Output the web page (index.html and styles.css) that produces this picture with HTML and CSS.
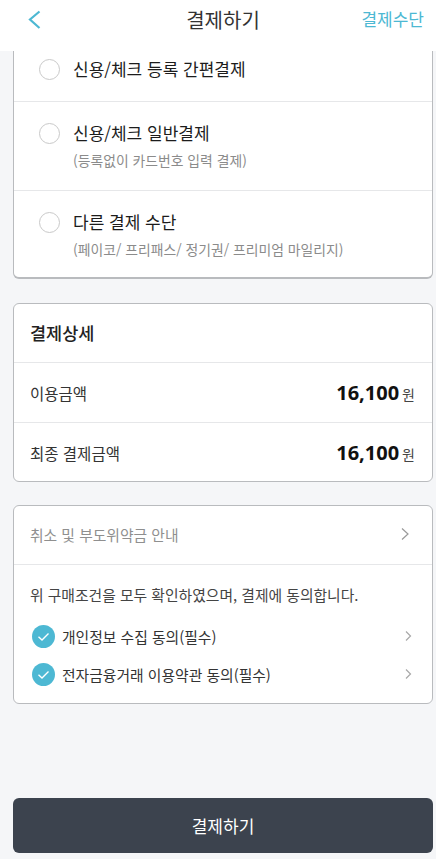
FILE: index.html
```html
<!DOCTYPE html>
<html lang="ko">
<head>
<meta charset="UTF-8">
<meta name="viewport" content="width=device-width, initial-scale=1.0">
<title>결제하기</title>
<link rel="stylesheet" href="styles.css">
</head>
<body>

<div class="header">
  <svg class="back" width="14" height="20" viewBox="0 0 14 20"><path d="M12.5 1.5 L3 9.5 L12.5 18" fill="none" stroke="#4db8d3" stroke-width="2.2"/></svg>
  <div class="header-title">결제하기</div>
  <div class="header-link">결제수단</div>
</div>

<div class="content">
  <!-- 결제수단 -->
  <div class="card card-methods">
    <div class="method method-first">
      <span class="radio"></span>
      <div class="method-text">
        <div class="method-name">신용/체크 등록 간편결제</div>
      </div>
    </div>
    <div class="method">
      <span class="radio"></span>
      <div class="method-text">
        <div class="method-name">신용/체크 일반결제</div>
        <div class="method-sub">(등록없이 카드번호 입력 결제)</div>
      </div>
    </div>
    <div class="method method-last">
      <span class="radio"></span>
      <div class="method-text">
        <div class="method-name">다른 결제 수단</div>
        <div class="method-sub">(페이코/ 프리패스/ 정기권/ 프리미엄 마일리지)</div>
      </div>
    </div>
  </div>

  <!-- 결제상세 -->
  <div class="card card-detail">
    <div class="detail-title">결제상세</div>
    <div class="detail-row">
      <span class="detail-label">이용금액</span>
      <span class="price"><b>16,100</b><small>원</small></span>
    </div>
    <div class="detail-row">
      <span class="detail-label">최종 결제금액</span>
      <span class="price"><b>16,100</b><small>원</small></span>
    </div>
  </div>

  <!-- 약관 -->
  <div class="card card-terms">
    <div class="notice">
      <span>취소 및 부도위약금 안내</span>
      <svg width="10" height="14" viewBox="0 0 10 14"><path d="M2 1.5 L8 7 L2 12.5" fill="none" stroke="#9a9a9a" stroke-width="1.2"/></svg>
    </div>
    <div class="terms">
      <div class="terms-lead">위 구매조건을 모두 확인하였으며, 결제에 동의합니다.</div>
      <div class="term">
        <svg class="check" width="23" height="23" viewBox="0 0 23 23"><circle cx="11.5" cy="11.5" r="11.5" fill="#4db8d3"/><path d="M6.5 11.8 L10 15 L16.5 8.5" fill="none" stroke="#fff" stroke-width="1.4"/></svg>
        <span class="term-name">개인정보 수집 동의(필수)</span>
        <svg width="10" height="12" viewBox="0 0 10 12"><path d="M3 1.5 L7.5 6 L3 10.5" fill="none" stroke="#a8a8a8" stroke-width="1.2"/></svg>
      </div>
      <div class="term">
        <svg class="check" width="23" height="23" viewBox="0 0 23 23"><circle cx="11.5" cy="11.5" r="11.5" fill="#4db8d3"/><path d="M6.5 11.8 L10 15 L16.5 8.5" fill="none" stroke="#fff" stroke-width="1.4"/></svg>
        <span class="term-name">전자금융거래 이용약관 동의(필수)</span>
        <svg width="10" height="12" viewBox="0 0 10 12"><path d="M3 1.5 L7.5 6 L3 10.5" fill="none" stroke="#a8a8a8" stroke-width="1.2"/></svg>
      </div>
    </div>
  </div>

  <button class="pay">결제하기</button>
</div>

</body>
</html>
```

FILE: styles.css
```css
* {
  box-sizing: border-box;
}

body {
  font-family: "Noto Sans CJK KR", "Noto Sans", sans-serif;
  background: #f5f6f8;
  margin: 0;
  height: 859px;
  overflow: hidden;
  color: #222;
}

.header {
  display: flex;
  align-items: center;
  justify-content: space-between;
  height: 51px;
  padding: 0 12px 12px 27px;
  background: #fff;
  position: relative;
}

.back {
  display: block;
}

.header-title {
  position: absolute;
  left: 10px;
  right: 0;
  top: 4px;
  text-align: center;
  font-size: 20px;
  line-height: 32px;
  color: #333;
}

.header-link {
  margin-bottom: 2px;
  font-size: 17px;
  line-height: 24px;
  color: #4db8d3;
}

.content {
  padding: 0 3px 0 13px;
}

.card {
  background: #fff;
  border: 1px solid #b9bbbe;
  border-radius: 6px;
}

.card-methods {
  border-top: none;
  border-radius: 0 0 6px 6px;
  border-bottom-width: 2px;
}

.method {
  display: flex;
  align-items: flex-start;
  height: 89px;
  padding: 20px 0 0 25px;
  border-top: 1px solid #e6e7e9;
}

.method-first {
  height: 50px;
  padding-top: 7px;
  border-top: none;
}

.method-last {
  height: 87px;
}

.radio {
  width: 21px;
  height: 21px;
  border: 1px solid #c9c9c9;
  border-radius: 50%;
  background: #fff;
  flex-shrink: 0;
  margin-top: 1px;
}

.method-text {
  margin-left: 13px;
  margin-top: -1px;
}

.method-name {
  font-size: 17px;
  line-height: 24px;
  color: #1c1c1c;
}

.method-sub {
  margin-top: 5px;
  font-size: 13.85px;
  line-height: 20px;
  color: #8b8b8b;
}

.card-detail {
  margin-top: 24px;
  height: 179px;
}

.detail-title {
  height: 58px;
  padding: 17px 0 0 16px;
  font-size: 17.5px;
  line-height: 24px;
  font-weight: 500;
  color: #222;
}

.detail-row {
  display: flex;
  align-items: center;
  justify-content: space-between;
  height: 60px;
  padding: 0 17px 0 16px;
  border-top: 1px solid #e6e7e9;
}

.detail-label {
  font-size: 15.5px;
  color: #333;
}

.price b {
  font-family: "Noto Sans", sans-serif;
  font-size: 20px;
  font-weight: 700;
  color: #111;
}

.price small {
  margin-left: 3px;
  font-size: 14px;
  color: #444;
}

.card-terms {
  margin-top: 23px;
  height: 199px;
}

.notice {
  display: flex;
  align-items: center;
  justify-content: space-between;
  height: 58px;
  padding: 0 22px 2px 16px;
  font-size: 14.8px;
  color: #8f8f8f;
}

.terms {
  border-top: 1px solid #e6e7e9;
  padding: 19px 19px 0 16px;
}

.terms-lead {
  font-size: 14.8px;
  line-height: 22px;
  color: #444;
}

.term {
  display: flex;
  align-items: center;
  height: 38px;
  font-size: 14.8px;
  color: #333;
}

.terms-lead + .term {
  margin-top: 11px;
}

.check {
  margin-left: 2px;
  flex-shrink: 0;
}

.term-name {
  margin-left: 7px;
  flex: 1;
}

.pay {
  display: block;
  width: 100%;
  height: 55px;
  margin-top: 94px;
  border: none;
  border-radius: 6px;
  background: #3c434e;
  color: #fff;
  font-family: inherit;
  font-size: 17px;
}
```
